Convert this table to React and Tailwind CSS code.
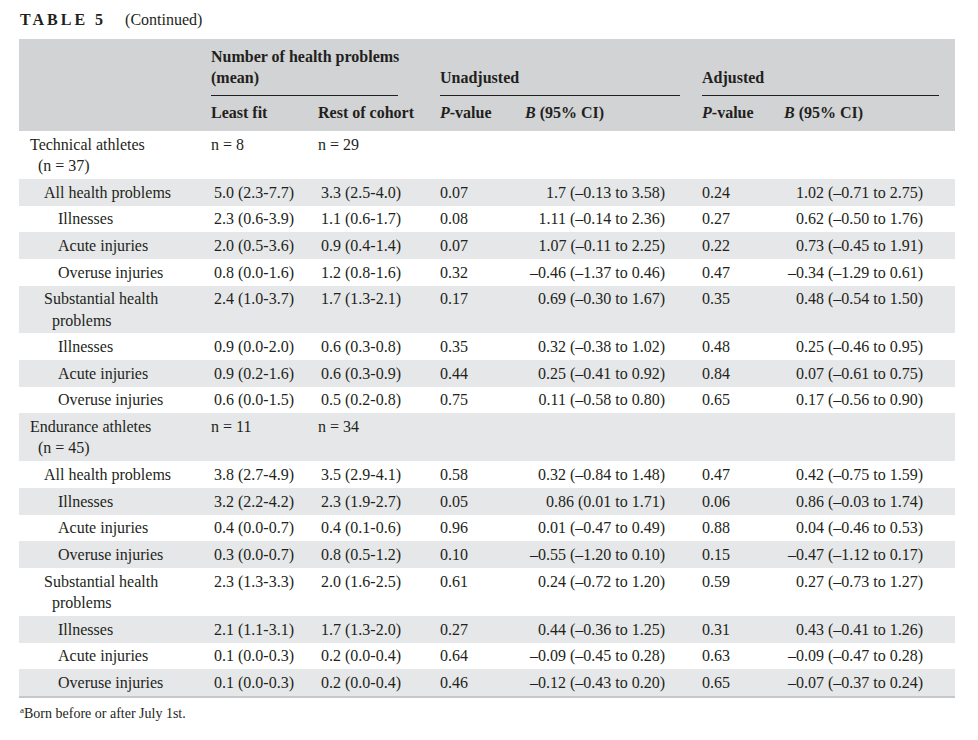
const rows = [
  { kind: "group", label: ["Technical athletes", "(n = 37)"], a: "n = 8", b: "n = 29" },
  { kind: "cat", label: ["All health problems"], a: "5.0 (2.3-7.7)", b: "3.3 (2.5-4.0)", p1: "0.07", b1: "1.7 (–0.13 to 3.58)", p2: "0.24", b2: "1.02 (–0.71 to 2.75)" },
  { kind: "sub", label: ["Illnesses"], a: "2.3 (0.6-3.9)", b: "1.1 (0.6-1.7)", p1: "0.08", b1: "1.11 (–0.14 to 2.36)", p2: "0.27", b2: "0.62 (–0.50 to 1.76)" },
  { kind: "sub", label: ["Acute injuries"], a: "2.0 (0.5-3.6)", b: "0.9 (0.4-1.4)", p1: "0.07", b1: "1.07 (–0.11 to 2.25)", p2: "0.22", b2: "0.73 (–0.45 to 1.91)" },
  { kind: "sub", label: ["Overuse injuries"], a: "0.8 (0.0-1.6)", b: "1.2 (0.8-1.6)", p1: "0.32", b1: "–0.46 (–1.37 to 0.46)", p2: "0.47", b2: "–0.34 (–1.29 to 0.61)" },
  { kind: "cat", label: ["Substantial health", "problems"], a: "2.4 (1.0-3.7)", b: "1.7 (1.3-2.1)", p1: "0.17", b1: "0.69 (–0.30 to 1.67)", p2: "0.35", b2: "0.48 (–0.54 to 1.50)" },
  { kind: "sub", label: ["Illnesses"], a: "0.9 (0.0-2.0)", b: "0.6 (0.3-0.8)", p1: "0.35", b1: "0.32 (–0.38 to 1.02)", p2: "0.48", b2: "0.25 (–0.46 to 0.95)" },
  { kind: "sub", label: ["Acute injuries"], a: "0.9 (0.2-1.6)", b: "0.6 (0.3-0.9)", p1: "0.44", b1: "0.25 (–0.41 to 0.92)", p2: "0.84", b2: "0.07 (–0.61 to 0.75)" },
  { kind: "sub", label: ["Overuse injuries"], a: "0.6 (0.0-1.5)", b: "0.5 (0.2-0.8)", p1: "0.75", b1: "0.11 (–0.58 to 0.80)", p2: "0.65", b2: "0.17 (–0.56 to 0.90)" },
  { kind: "group", label: ["Endurance athletes", "(n = 45)"], a: "n = 11", b: "n = 34" },
  { kind: "cat", label: ["All health problems"], a: "3.8 (2.7-4.9)", b: "3.5 (2.9-4.1)", p1: "0.58", b1: "0.32 (–0.84 to 1.48)", p2: "0.47", b2: "0.42 (–0.75 to 1.59)" },
  { kind: "sub", label: ["Illnesses"], a: "3.2 (2.2-4.2)", b: "2.3 (1.9-2.7)", p1: "0.05", b1: "0.86 (0.01 to 1.71)", p2: "0.06", b2: "0.86 (–0.03 to 1.74)" },
  { kind: "sub", label: ["Acute injuries"], a: "0.4 (0.0-0.7)", b: "0.4 (0.1-0.6)", p1: "0.96", b1: "0.01 (–0.47 to 0.49)", p2: "0.88", b2: "0.04 (–0.46 to 0.53)" },
  { kind: "sub", label: ["Overuse injuries"], a: "0.3 (0.0-0.7)", b: "0.8 (0.5-1.2)", p1: "0.10", b1: "–0.55 (–1.20 to 0.10)", p2: "0.15", b2: "–0.47 (–1.12 to 0.17)" },
  { kind: "cat", label: ["Substantial health", "problems"], a: "2.3 (1.3-3.3)", b: "2.0 (1.6-2.5)", p1: "0.61", b1: "0.24 (–0.72 to 1.20)", p2: "0.59", b2: "0.27 (–0.73 to 1.27)" },
  { kind: "sub", label: ["Illnesses"], a: "2.1 (1.1-3.1)", b: "1.7 (1.3-2.0)", p1: "0.27", b1: "0.44 (–0.36 to 1.25)", p2: "0.31", b2: "0.43 (–0.41 to 1.26)" },
  { kind: "sub", label: ["Acute injuries"], a: "0.1 (0.0-0.3)", b: "0.2 (0.0-0.4)", p1: "0.64", b1: "–0.09 (–0.45 to 0.28)", p2: "0.63", b2: "–0.09 (–0.47 to 0.28)" },
  { kind: "sub", label: ["Overuse injuries"], a: "0.1 (0.0-0.3)", b: "0.2 (0.0-0.4)", p1: "0.46", b1: "–0.12 (–0.43 to 0.20)", p2: "0.65", b2: "–0.07 (–0.37 to 0.24)" }
];

const indent = {
  group: "pl-[11px]",
  cat: "pl-[25px]",
  sub: "pl-[39px]"
};

function DataRow({ row, striped }) {
  const isGroup = row.kind === "group";
  const cell = "py-[2.67px] align-top whitespace-nowrap";
  return (
    <tr className={striped ? "bg-[#e6e7e8]" : "bg-white"}>
      <td className={`${cell} ${indent[row.kind]}`}>
        <div>{row.label[0]}</div>
        {row.label[1] ? <div className="pl-[8px]">{row.label[1]}</div> : null}
      </td>
      <td className={`${cell} ${isGroup ? "" : "pl-[3px]"}`}>{row.a}</td>
      <td className={`${cell} ${isGroup ? "" : "pl-[3px]"}`}>{row.b}</td>
      <td className={cell}>{row.p1}</td>
      <td className={`${cell} pr-[37px] text-right`}>{row.b1}</td>
      <td className={cell}>{row.p2}</td>
      <td className={`${cell} pr-[32px] text-right`}>{row.b2}</td>
    </tr>
  );
}

export default function App() {
  return (
    <div
      className="min-h-screen bg-white pt-[10px] text-[#231f20]"
      style={{ fontFamily: '"Liberation Serif", "Times New Roman", serif' }}
    >
      <div className="flex items-baseline pl-[20px] leading-[20px]">
        <span className="text-[16px] font-bold tracking-[3px]">TABLE 5</span>
        <span className="ml-[19px] text-[16px]">(Continued)</span>
      </div>

      <table className="ml-[19px] mt-[9px] w-[936px] table-fixed border-collapse text-[16px] leading-[21.33px]">
        <colgroup>
          <col className="w-[192px]" />
          <col className="w-[107px]" />
          <col className="w-[122px]" />
          <col className="w-[85px]" />
          <col className="w-[177px]" />
          <col className="w-[82px]" />
          <col className="w-[171px]" />
        </colgroup>
        <thead className="whitespace-nowrap bg-[#d1d3d4] text-left font-bold">
          <tr>
            <th className="pt-[7px]" />
            <th colSpan={2} className="pt-[7px] align-bottom font-bold">
              <div className="mr-[42px] border-b border-[#231f20] pb-[6px]">
                Number of health problems
                <br />
                (mean)
              </div>
            </th>
            <th colSpan={2} className="align-bottom font-bold">
              <div className="mr-[22px] border-b border-[#231f20] pb-[6px]">Unadjusted</div>
            </th>
            <th colSpan={2} className="align-bottom font-bold">
              <div className="mr-[16px] border-b border-[#231f20] pb-[6px]">Adjusted</div>
            </th>
          </tr>
          <tr>
            <th className="pt-[6px] pb-[8px]" />
            <th className="pt-[6px] pb-[8px] font-bold">Least fit</th>
            <th className="pt-[6px] pb-[8px] font-bold">Rest of cohort</th>
            <th className="pt-[6px] pb-[8px] font-bold">
              <i>P</i>-value
            </th>
            <th className="pt-[6px] pb-[8px] font-bold">
              <i>B</i> (95% CI)
            </th>
            <th className="pt-[6px] pb-[8px] font-bold">
              <i>P</i>-value
            </th>
            <th className="pt-[6px] pb-[8px] font-bold">
              <i>B</i> (95% CI)
            </th>
          </tr>
        </thead>
        <tbody className="border-b-2 border-[#c7c8ca]">
          {rows.map((row, i) => (
            <DataRow key={i} row={row} striped={i % 2 === 1} />
          ))}
        </tbody>
      </table>

      <p className="mt-[6px] pl-[20px] text-[14px] leading-[20px]">
        <sup className="text-[9px]">a</sup>Born before or after July 1st.
      </p>
    </div>
  );
}
